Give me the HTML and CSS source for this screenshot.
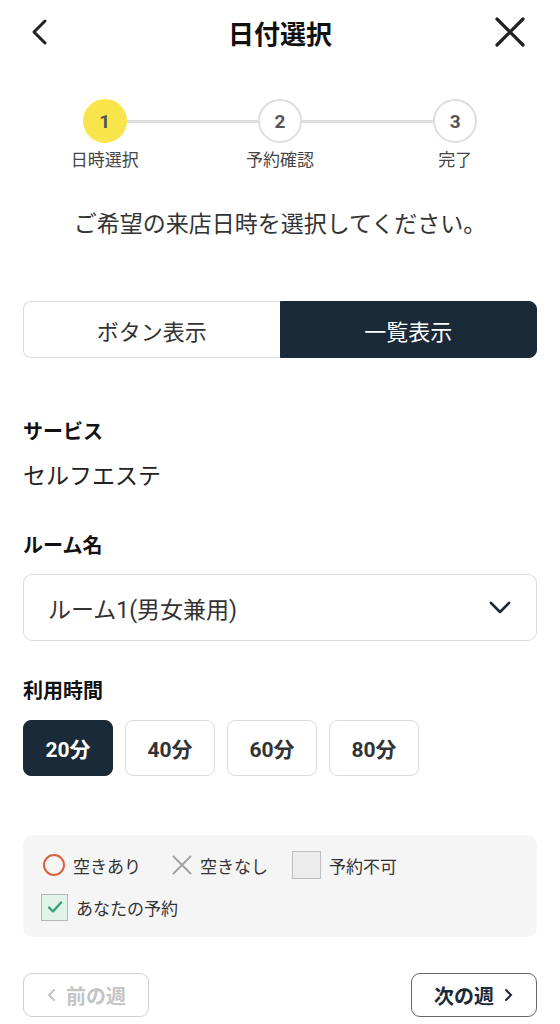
FILE: index.html
```html
<!DOCTYPE html>
<html lang="ja">
<head>
<meta charset="UTF-8">
<meta name="viewport" content="width=device-width, initial-scale=1.0">
<title>日付選択</title>
<link rel="stylesheet" href="styles.css">
</head>
<body>

<header class="topbar">
    <button class="icon-btn" aria-label="戻る">
        <svg width="28" height="28" viewBox="0 0 28 28"><path d="M19 3 L8 14 L19 25" fill="none" stroke="#222" stroke-width="3" stroke-linecap="round" stroke-linejoin="round"/></svg>
    </button>
    <h1>日付選択</h1>
    <button class="icon-btn close-btn" aria-label="閉じる">
        <svg width="32" height="32" viewBox="0 0 32 32"><path d="M3 3 L29 29 M29 3 L3 29" fill="none" stroke="#222" stroke-width="3.2" stroke-linecap="round"/></svg>
    </button>
</header>

<ol class="stepper">
    <li class="step active"><span class="circle">1</span><span class="step-label">日時選択</span></li>
    <li class="step"><span class="circle">2</span><span class="step-label">予約確認</span></li>
    <li class="step"><span class="circle">3</span><span class="step-label">完了</span></li>
</ol>

<p class="lead">ご希望の来店日時を選択してください。</p>

<div class="container">
    <div class="view-toggle">
        <button class="toggle-btn">ボタン表示</button>
        <button class="toggle-btn selected">一覧表示</button>
    </div>

    <h2 class="field-title service-title">サービス</h2>
    <p class="field-value">セルフエステ</p>

    <h2 class="field-title room-title">ルーム名</h2>
    <div class="select-box">
        <span>ルーム1(男女兼用)</span>
        <svg width="22" height="14" viewBox="0 0 22 14"><path d="M2 2 L11 11 L20 2" fill="none" stroke="#1b2a38" stroke-width="2.6" stroke-linecap="round" stroke-linejoin="round"/></svg>
    </div>

    <h2 class="field-title time-title">利用時間</h2>
    <div class="durations">
        <button class="duration selected">20分</button>
        <button class="duration">40分</button>
        <button class="duration">60分</button>
        <button class="duration">80分</button>
    </div>

    <div class="legend">
        <div class="legend-row">
            <span class="legend-item"><span class="mark-open"></span>空きあり</span>
            <span class="legend-item">
                <svg class="mark-full" width="22" height="22" viewBox="0 0 22 22"><path d="M2 2 L20 20 M20 2 L2 20" fill="none" stroke="#a0a0a0" stroke-width="1.8"/></svg>
                空きなし
            </span>
            <span class="legend-item"><span class="mark-closed"></span>予約不可</span>
        </div>
        <div class="legend-row">
            <span class="legend-item">
                <span class="mark-mine">
                    <svg width="18" height="18" viewBox="0 0 18 18"><path d="M3 9.5 L7 13.5 L15 4.5" fill="none" stroke="#35a37a" stroke-width="2.4" stroke-linecap="round" stroke-linejoin="round"/></svg>
                </span>
                あなたの予約
            </span>
        </div>
    </div>

    <div class="week-nav">
        <button class="week-btn" disabled>
            <svg width="10" height="14" viewBox="0 0 10 14"><path d="M8 2 L3 7 L8 12" fill="none" stroke="#c4c4c4" stroke-width="2" stroke-linecap="round"/></svg>
            前の週
        </button>
        <button class="week-btn">
            次の週
            <svg width="10" height="14" viewBox="0 0 10 14"><path d="M2 2 L7 7 L2 12" fill="none" stroke="#1b2a38" stroke-width="2" stroke-linecap="round"/></svg>
        </button>
    </div>
</div>

</body>
</html>
```

FILE: styles.css
```css
body {
    margin: 0;
    padding: 0;
    background-color: #fff;
    color: #222;
    font-family: Roboto, "Noto Sans CJK JP", sans-serif;
}

button {
    font-family: inherit;
    cursor: pointer;
}

.topbar {
    display: grid;
    grid-template-columns: 1fr auto 1fr;
    align-items: center;
    height: 64px;
    padding: 0 34px 0 26px;
}

.topbar h1 {
    margin: 0 0 0 8px;
    font-size: 26px;
    font-weight: 700;
    color: #111;
}

.icon-btn {
    display: flex;
    padding: 0;
    border: none;
    background: none;
}

.close-btn {
    justify-self: end;
}

.stepper {
    display: flex;
    list-style: none;
    margin: 35px 0 0 0;
    padding: 0 17px;
}

.step {
    flex: 1;
    position: relative;
    display: flex;
    flex-direction: column;
    align-items: center;
}

.step + .step::before {
    content: "";
    position: absolute;
    top: 21px;
    right: 50%;
    width: 100%;
    height: 3px;
    background: #dedede;
}

.circle {
    position: relative;
    z-index: 1;
    display: flex;
    align-items: center;
    justify-content: center;
    width: 40px;
    height: 40px;
    border: 2px solid #dedede;
    border-radius: 50%;
    background: #fff;
    font-size: 19px;
    font-weight: 700;
    color: #555;
}

.step.active .circle {
    border-color: #f8e54c;
    background: #f8e54c;
}

.step-label {
    margin-top: 7px;
    font-size: 17px;
    line-height: 20px;
    color: #444;
}

.lead {
    margin: 41px 0 0 0;
    text-align: center;
    font-size: 23px;
    line-height: 28px;
    color: #333;
}

.container {
    padding: 0 23px;
}

.view-toggle {
    display: flex;
    margin-top: 62px;
    height: 57px;
}

.toggle-btn {
    flex: 1;
    border: 1px solid #dcdcdc;
    border-right: none;
    border-radius: 8px 0 0 8px;
    background: #fff;
    font-size: 22px;
    color: #333;
}

.toggle-btn.selected {
    border: 1px solid #1b2a38;
    border-radius: 0 8px 8px 0;
    background: #1b2a38;
    color: #fff;
}

.field-title {
    margin: 0;
    font-size: 20px;
    line-height: 26px;
    font-weight: 700;
    color: #111;
}

.service-title {
    margin-top: 61px;
}

.room-title {
    margin-top: 42px;
}

.time-title {
    margin-top: 37px;
}

.field-value {
    margin: 18px 0 0 0;
    font-size: 23px;
    line-height: 28px;
    color: #222;
}

.select-box {
    display: flex;
    align-items: center;
    justify-content: space-between;
    box-sizing: border-box;
    height: 67px;
    margin-top: 15px;
    padding: 0 25px 0 24px;
    border: 1px solid #dcdcdc;
    border-radius: 9px;
    font-size: 23px;
    color: #333;
}

.durations {
    display: flex;
    gap: 12px;
    margin-top: 16px;
}

.duration {
    width: 90px;
    height: 56px;
    border: 1px solid #dcdcdc;
    border-radius: 8px;
    background: #fff;
    font-size: 21px;
    font-weight: 700;
    color: #333;
}

.duration.selected {
    border-color: #1b2a38;
    background: #1b2a38;
    color: #fff;
}

.legend {
    display: flex;
    flex-direction: column;
    gap: 12px;
    margin-top: 59px;
    padding: 15px 18px 15px 18px;
    border-radius: 10px;
    background: #f5f5f5;
}

.legend-row {
    display: flex;
    align-items: center;
    gap: 22px;
    height: 30px;
}

.legend-item {
    display: flex;
    align-items: center;
    gap: 8px;
    font-size: 17px;
    color: #333;
}

.mark-open {
    box-sizing: border-box;
    width: 22px;
    height: 22px;
    margin-left: 2px;
    border: 2.5px solid #d8643f;
    border-radius: 50%;
}

.mark-full {
    margin-left: 8px;
    margin-right: -1px;
}

.mark-closed {
    box-sizing: border-box;
    width: 29px;
    height: 28px;
    margin-left: 2px;
    border: 1.5px solid #bdbdbd;
    background: #ececec;
}

.mark-mine {
    display: flex;
    align-items: center;
    justify-content: center;
    box-sizing: border-box;
    width: 27px;
    height: 27px;
    border: 1.5px solid #b5b5b5;
    background: #e2f3ea;
}

.week-nav {
    display: flex;
    justify-content: space-between;
    margin-top: 36px;
}

.week-btn {
    display: flex;
    align-items: center;
    justify-content: center;
    gap: 10px;
    width: 126px;
    height: 44px;
    border: 1.5px solid #666;
    border-radius: 9px;
    background: #fff;
    font-size: 20px;
    font-weight: 700;
    color: #1b2a38;
}

.week-btn:disabled {
    border-color: #cfcfcf;
    color: #c4c4c4;
    cursor: default;
}
```
